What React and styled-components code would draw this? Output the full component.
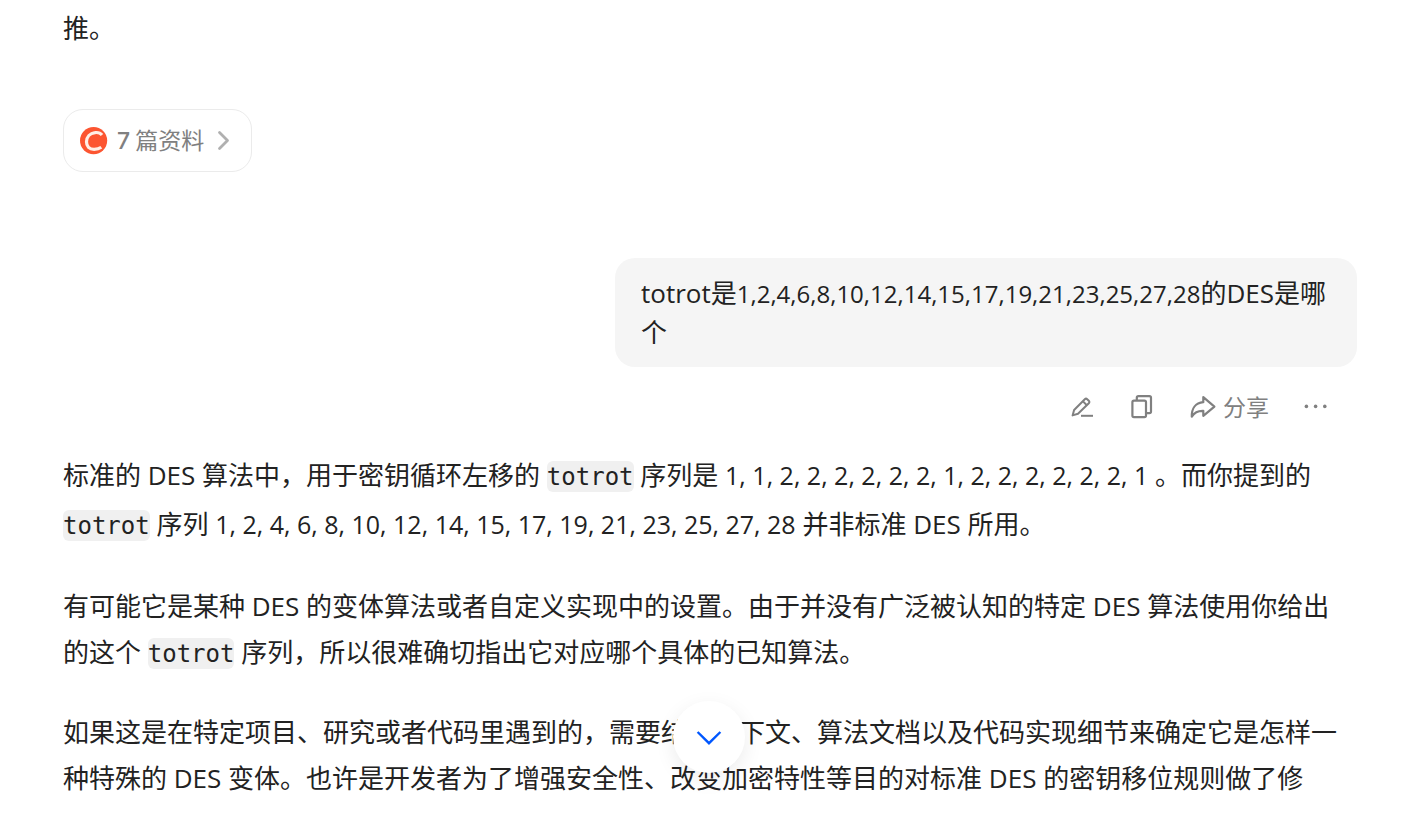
import styled, { createGlobalStyle } from 'styled-components'

const GlobalStyle = createGlobalStyle`
  * {
    box-sizing: border-box;
  }

  body {
    margin: 0;
    background-color: #ffffff;
    color: #222222;
    font-family: 'Open Sans', 'Noto Sans CJK SC', sans-serif;
  }

  button {
    padding: 0;
    border: none;
    background: none;
    font-family: inherit;
    cursor: pointer;
  }
`

const Chat = styled.main`
  display: flex;
  flex-direction: column;
  padding: 5px 61px 6px 63px;
`

const Answer = styled.article`
  display: flex;
  flex-direction: column;
  align-items: flex-start;
  gap: ${({ $gap }) => $gap}px;
`

const Paragraph = styled.p`
  margin: 0;
  font-size: 26px;
  line-height: ${({ $tall }) => ($tall ? '49px' : '46px')};
`

const Numbers = styled.span`
  font-size: ${({ $compact }) => ($compact ? '24px' : '25px')};
`

const Code = styled.code`
  padding: 2px 0 1px;
  border-radius: 6px;
  background-color: #f0f0f0;
  font-family: 'DejaVu Sans Mono', monospace;
  font-size: 24px;
  line-height: 1;
`

const Sources = styled.button`
  display: flex;
  align-items: center;
  height: 63px;
  && {
    padding: 0 16px;
    border: 1px solid #ebebeb;
  }
  border-radius: 20px;
  color: #808080;
  font-size: 23px;

  strong {
    margin: 0 5px 0 9px;
    font-family: 'Inter', sans-serif;
    font-weight: 500;
  }

  svg:last-child {
    margin-left: 11px;
  }
`

const Label = styled.span`
  padding-bottom: 3px;
`

const Question = styled.section`
  display: flex;
  flex-direction: column;
  align-items: flex-end;
  margin: 86px 0 24px;
`

const Bubble = styled.p`
  max-width: 742px;
  margin: 0;
  padding: 16px 26px 15px;
  border-radius: 20px;
  background-color: #f5f5f5;
  font-size: 26px;
  line-height: 39px;
`

const Actions = styled.div`
  display: flex;
  align-items: center;
  gap: 34px;
  margin: 20px 28px 0 0;
`

const Action = styled.button`
  display: flex;
  align-items: center;
  gap: 7px;
  height: 40px;
  color: #808080;
  font-size: 23px;
`

const ScrollDown = styled.button`
  position: fixed;
  bottom: 40px;
  left: 50%;
  display: flex;
  align-items: center;
  justify-content: center;
  width: 72px;
  height: 72px;
  margin-left: -36px;
  border-radius: 50%;
  && {
    background-color: #ffffff;
  }
  box-shadow: 0 6px 20px rgba(0, 0, 0, 0.08);
`

const SourceLogo = () => (
  <svg width="28" height="28" viewBox="0 0 28 28" fill="none" aria-hidden="true">
    <circle cx="13.6" cy="13.6" r="13.6" fill="#fc5531" />
    <path
      d="M22 8C20.3 5.9 17.8 5.2 15 5.6C10 6.2 6.6 10 6.5 14.8C6.4 19.4 9.4 22.3 14.1 22.3C16.8 22.3 19.2 21.7 21.3 20.2"
      stroke="#ffeee6"
      strokeWidth="3.2"
    />
  </svg>
)

const ChevronRight = () => (
  <svg width="20" height="22" viewBox="0 0 20 22" fill="none" aria-hidden="true">
    <path d="M4.5 2.6L12.5 10.6L4.5 18.6" stroke="#b0b0b0" strokeWidth="2.8" strokeLinecap="round" strokeLinejoin="round" />
  </svg>
)

const PencilIcon = () => (
  <svg width="26" height="26" viewBox="0 0 26 26" fill="none" stroke="currentColor" strokeWidth="2" strokeLinejoin="round" aria-hidden="true">
    <path d="M2.6 21.4L4.1 16L14.8 5.2Q16 4 17.2 5.2L18.8 6.8Q20 8 18.8 9.2L8 19.8Z" />
    <path d="M13 7.4L16.6 11" />
    <path d="M11 21.8H23" />
  </svg>
)

const CopyIcon = () => (
  <svg width="26" height="26" viewBox="0 0 26 26" fill="none" stroke="currentColor" strokeWidth="2.2" strokeLinejoin="round" aria-hidden="true">
    <rect x="2.4" y="6.6" width="13.6" height="16.6" rx="1.6" />
    <path d="M6.8 6.6V3.8Q6.8 2.2 8.4 2.2H19.4Q21 2.2 21 3.8V17.6Q21 19.2 19.4 19.2H16" />
  </svg>
)

const ShareIcon = () => (
  <svg width="26" height="26" viewBox="0 0 26 26" fill="none" stroke="currentColor" strokeWidth="2.2" strokeLinejoin="round" aria-hidden="true">
    <path d="M13.3 3.2L24.4 12.6L13.3 21.8V16.8C8.3 16.6 4.4 18.4 1.8 22.6C1.6 14.6 5.4 8.8 13.3 8.2Z" />
  </svg>
)

const MoreIcon = () => (
  <svg width="26" height="26" viewBox="0 0 26 26" fill="currentColor" aria-hidden="true">
    <circle cx="3.4" cy="12.4" r="1.8" />
    <circle cx="12.6" cy="12.4" r="1.8" />
    <circle cx="21.8" cy="12.4" r="1.8" />
  </svg>
)

const ChevronDown = () => (
  <svg width="28" height="28" viewBox="0 0 28 28" fill="none" aria-hidden="true">
    <path d="M2.6 9L14 20.2L25.4 9" stroke="#0057ff" strokeWidth="2.4" />
  </svg>
)

export default function App() {
  return (
    <>
      <GlobalStyle />
      <Chat>
        <Answer $gap={58}>
          <Paragraph>推。</Paragraph>
          <Sources type="button">
            <SourceLogo />
            <strong>7</strong>
            <Label>篇资料</Label>
            <ChevronRight />
          </Sources>
        </Answer>

        <Question>
          <Bubble>
            totrot是<Numbers $compact>1,2,4,6,8,10,12,14,15,17,19,21,23,25,27,28</Numbers>的DES是哪个
          </Bubble>
          <Actions>
            <Action type="button" aria-label="编辑">
              <PencilIcon />
            </Action>
            <Action type="button" aria-label="复制">
              <CopyIcon />
            </Action>
            <Action type="button">
              <ShareIcon />
              <Label>分享</Label>
            </Action>
            <Action type="button" aria-label="更多">
              <MoreIcon />
            </Action>
          </Actions>
        </Question>

        <Answer $gap={34}>
          <Paragraph $tall>
            标准的 DES 算法中，用于密钥循环左移的 <Code>totrot</Code> 序列是{' '}
            <Numbers>1, 1, 2, 2, 2, 2, 2, 2, 1, 2, 2, 2, 2, 2, 2, 1</Numbers> 。而你提到的 <Code>totrot</Code> 序列{' '}
            <Numbers>1, 2, 4, 6, 8, 10, 12, 14, 15, 17, 19, 21, 23, 25, 27, 28</Numbers> 并非标准 DES 所用。
          </Paragraph>
          <Paragraph>
            有可能它是某种 DES 的变体算法或者自定义实现中的设置。由于并没有广泛被认知的特定 DES 算法使用你给出
            <br />
            的这个 <Code>totrot</Code> 序列，所以很难确切指出它对应哪个具体的已知算法。
          </Paragraph>
          <Paragraph>
            如果这是在特定项目、研究或者代码里遇到的，需要结合上下文、算法文档以及代码实现细节来确定它是怎样一种特殊的
            DES 变体。也许是开发者为了增强安全性、改变加密特性等目的对标准 DES 的密钥移位规则做了修
          </Paragraph>
        </Answer>
      </Chat>
      <ScrollDown type="button" aria-label="滚动到底部">
        <ChevronDown />
      </ScrollDown>
    </>
  )
}
